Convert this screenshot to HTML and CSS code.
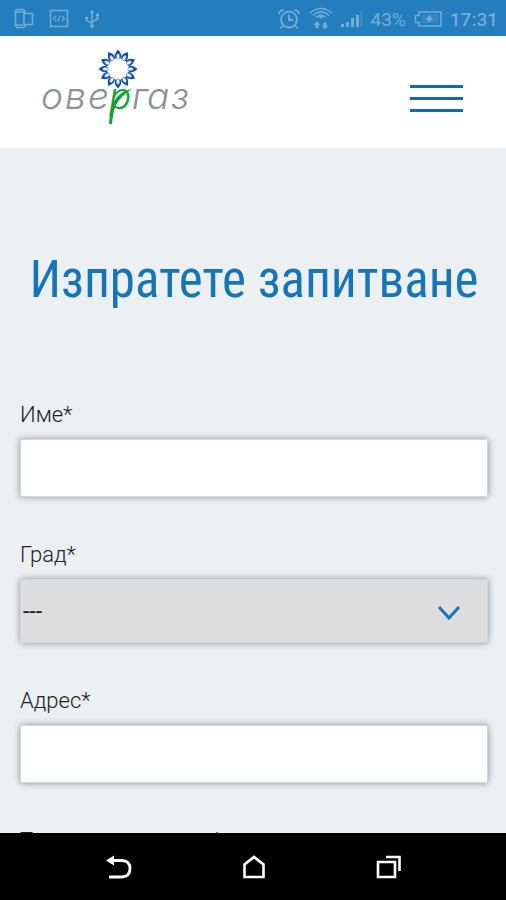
FILE: index.html
```html
<!DOCTYPE html>
<html lang="bg">
<head>
<meta charset="UTF-8">
<meta name="viewport" content="width=device-width, initial-scale=1">
<title>Овергаз - Изпратете запитване</title>
<link rel="stylesheet" href="styles.css">
</head>
<body>
<div class="status-bar">
  <div class="status-left">
    <svg width="20" height="22" viewBox="0 0 20 22" fill="none" stroke="currentColor" stroke-width="1.6">
      <path d="M11 5V3L9.500 1.500H3L1.500 3V18L3 19.500H9.500L11 18V16M1.500 4H11M1.500 17H9"/>
      <path d="M10 5.500H18.500V16.500H10Z"/>
    </svg>
    <svg width="20" height="20" viewBox="0 0 20 20" fill="none" stroke="currentColor" stroke-width="1.500">
      <path d="M1.500 1.500H18.500V17.500H1.500Z"/>
      <path d="M7 7L4.500 9.500L7 12M13 7L15.500 9.500L13 12M11 6.500L9 12.500" stroke-width="1.200"/>
    </svg>
    <svg width="16" height="20" viewBox="0 0 16 20" fill="none" stroke="currentColor" stroke-width="1.500">
      <path d="M8 17V3M8 14L2.500 11.500V8.500M8 13L13.500 10V6"/>
      <path d="M5.500 4L8 1L10.500 4Z" fill="currentColor" stroke="none"/>
      <circle cx="8" cy="17" r="2" fill="currentColor" stroke="none"/>
      <circle cx="2.500" cy="9" r="1.500" fill="currentColor" stroke="none"/>
      <path d="M12 4.500H15V7.500H12Z" fill="currentColor" stroke="none"/>
    </svg>
  </div>
  <div class="status-right">
    <svg width="24" height="22" viewBox="0 0 24 22" fill="none" stroke="currentColor" stroke-width="1.800">
      <circle cx="12" cy="11.500" r="8"/>
      <path d="M12 6.500V12H16M6 17.500L3.500 20.500M18 17.500L20.500 20.500M2 6Q2.500 2.500 6.500 2M22 6Q21.500 2.500 17.500 2"/>
    </svg>
    <svg width="24" height="24" viewBox="0 0 24 24" fill="none" stroke="currentColor" stroke-width="1.500">
      <path d="M1 6Q12 -3 23 6M4 8.500Q12 1 20 8.500M7 10.500Q12 5.500 17 10.500"/>
      <path d="M12 12L9 9.500Q12 7.500 15 9.500Z" fill="currentColor" stroke="none"/>
      <path d="M8 14L11.500 18H9.500V21H6.500V18H4.500ZM16 22.500L12.500 18.500H14.500V15.500H17.500V18.500H19.500Z" fill="currentColor" stroke="none"/>
    </svg>
    <svg width="22" height="18" viewBox="0 0 22 18" fill="currentColor">
      <path d="M0 14H3V17H0ZM5 12H8V17H5ZM10 8H13V17H10ZM15 5H18V17H15Z"/>
      <path d="M19.500 1H21.500V17H19.500Z" opacity=".4"/>
    </svg>
    <span class="battery">43%</span>
    <svg width="28" height="18" viewBox="0 0 28 18" fill="none" stroke="currentColor" stroke-width="1.500">
      <path d="M5 2H27V16H5V12.500H1.500V5.500H5Z"/>
      <path d="M8 5H24V13H8Z" fill="currentColor" stroke="none" opacity=".25"/>
      <path d="M15.500 5L17 7.500L19 9L17 10.500L15.500 13L14 10.500L12 9L14 7.500Z" fill="currentColor" stroke="none"/>
    </svg>
    <span class="clock">17:31</span>
  </div>
</div>

<header class="header">
  <a class="logo" href="#" aria-label="Овергаз">
    <svg width="154" height="80" viewBox="0 0 154 80">
      <defs>
        <g id="petal">
          <path d="M0 -19.500Q5 -14 2.500 -10.500H-2.500Q-5 -14 0 -19.500Z" fill="#174d9c"/>
          <ellipse cx="0" cy="-12.500" rx="1.500" ry="2.800" fill="#fff" stroke="#6f9ed2" stroke-width=".8"/>
        </g>
      </defs>
      <g transform="translate(77 21)">
        <use href="#petal"/>
        <use href="#petal" transform="rotate(30)"/>
        <use href="#petal" transform="rotate(60)"/>
        <use href="#petal" transform="rotate(90)"/>
        <use href="#petal" transform="rotate(120)"/>
        <use href="#petal" transform="rotate(150)"/>
        <use href="#petal" transform="rotate(180)"/>
        <use href="#petal" transform="rotate(210)"/>
        <use href="#petal" transform="rotate(240)"/>
        <use href="#petal" transform="rotate(270)"/>
        <use href="#petal" transform="rotate(300)"/>
        <use href="#petal" transform="rotate(330)"/>
      </g>
      <text class="logo-text" y="61"><tspan x="0 24 47">ове</tspan><tspan class="logo-leaf" x="68">р</tspan><tspan x="91 106 130">газ</tspan></text>
      <path d="M68 76Q69 57 76 49Q81 43 91 41Q80 48 75 57Q72 64 71 76Z" fill="#14a03c"/>
    </svg>
  </a>
  <button class="menu-button" type="button" aria-label="Меню">
    <span></span>
    <span></span>
    <span></span>
  </button>
</header>

<main class="content">
  <h1>Изпратете запитване</h1>
  <form class="inquiry-form">
    <div class="field">
      <label for="name">Име*</label>
      <input type="text" id="name" name="name">
    </div>
    <div class="field">
      <label for="city">Град*</label>
      <div class="select-box">
        <select id="city" name="city">
          <option>---</option>
        </select>
        <svg class="arrow" width="24" height="16" viewBox="0 0 24 16" fill="none" stroke="#1a75b8" stroke-width="3">
          <path d="M2 2L12 13L22 2"/>
        </svg>
      </div>
    </div>
    <div class="field">
      <label for="address">Адрес*</label>
      <input type="text" id="address" name="address">
    </div>
    <div class="field">
      <label for="subject">Тема на запитване*</label>
      <input type="text" id="subject" name="subject">
    </div>
  </form>
</main>

<nav class="nav-bar">
  <button type="button" aria-label="Назад">
    <svg width="26" height="24" viewBox="0 0 26 24" fill="none" stroke="#fff" stroke-width="2.800">
      <path d="M7 5.500H16Q24 6 24 13.500Q24 21.500 16 22H3"/>
      <path d="M0 5.500L8 .5V10.500Z" fill="#fff" stroke="none"/>
    </svg>
  </button>
  <button type="button" aria-label="Начало">
    <svg width="22" height="24" viewBox="0 0 22 24" fill="none" stroke="#fff" stroke-width="2.600">
      <path d="M1.500 22V9.500L11 2L20.500 9.500V22Z"/>
    </svg>
  </button>
  <button type="button" aria-label="Последни">
    <svg width="26" height="24" viewBox="0 0 26 24" fill="none" stroke="#fff" stroke-width="2.600">
      <path d="M2 7H19V22H2ZM10 2H23.500V16"/>
    </svg>
  </button>
</nav>
</body>
</html>
```
FILE: styles.css
```css
* {
  box-sizing: border-box;
}
body {
  margin: 0;
  height: 100vh;
  display: flex;
  flex-direction: column;
  font-family: Roboto, "Open Sans", sans-serif;
  background-color: #ecf0f3;
  color: #222;
}
svg {
  display: block;
}

/* phone status bar */
.status-bar {
  display: flex;
  flex-shrink: 0;
  justify-content: space-between;
  align-items: center;
  height: 36px;
  padding: 2px 8px 0 14px;
  background-color: #247dbc;
  color: #73acd8;
}
.status-left {
  display: flex;
  align-items: center;
  gap: 15px;
}
.status-right {
  display: flex;
  align-items: center;
  gap: 8px;
}
.battery {
  font-size: 19px;
}
.clock {
  font-size: 19px;
  font-weight: 500;
}

.header {
  display: flex;
  flex-shrink: 0;
  justify-content: space-between;
  align-items: center;
  height: 112px;
  padding: 0 43px 0 41px;
  background-color: #fff;
}
.logo {
  margin-bottom: 8px;
}
.logo-text {
  font-family: Inter, sans-serif;
  font-size: 37px;
  font-style: italic;
  font-weight: 300;
  fill: #8f9193;
}
.logo-leaf {
  fill: #14a03c;
}
.menu-button {
  display: flex;
  flex-direction: column;
  gap: 9px;
  width: 53px;
  margin-top: 12px;
  padding: 0;
  border: none;
  background: none;
  cursor: pointer;
}
.menu-button span {
  height: 3px;
  background-color: #1469ad;
}

.content {
  flex: 1;
  min-height: 0;
  padding: 100px 18px 0 20px;
  overflow: hidden;
}
h1 {
  margin: 0 0 88px;
  font-family: "Roboto Condensed", Roboto, sans-serif;
  font-size: 51px;
  font-weight: 400;
  line-height: 64px;
  text-align: center;
  white-space: nowrap;
  color: #1675b6;
}
.field {
  margin-bottom: 43px;
}
.field label {
  display: block;
  padding-top: 1px;
  margin-bottom: 10px;
  font-size: 22px;
  font-weight: 300;
  line-height: 28px;
}
.field input,
.field select {
  display: block;
  width: 100%;
  height: 58px;
  padding: 0 4px;
  border: 1px solid #c8dbe9;
  border-radius: 2px;
  background-color: #fff;
  box-shadow: 0 0 7px rgba(0, 0, 0, 0.4);
  font-family: inherit;
  font-size: 23px;
}
.select-box {
  position: relative;
}
.field select {
  height: 64px;
  padding: 0 2px;
  appearance: none;
  background-color: #ddd;
  color: #222;
}
.arrow {
  position: absolute;
  top: 26px;
  right: 27px;
  pointer-events: none;
}

/* phone navigation buttons */
.nav-bar {
  display: flex;
  flex-shrink: 0;
  justify-content: center;
  gap: 111px;
  height: 67px;
  padding-left: 2px;
  background-color: #000;
}
.nav-bar button {
  padding: 0;
  border: none;
  background: none;
}
```
